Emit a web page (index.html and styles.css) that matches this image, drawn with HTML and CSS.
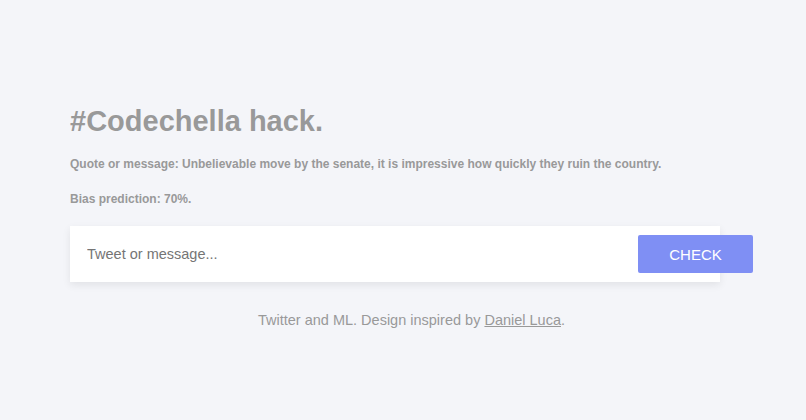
FILE: index.html
```html
<!DOCTYPE html>
<html>
<head>
<meta charset="utf-8">
<link rel="stylesheet" href="styles.css">
</head>
<body>
<main class="wrap">
  <h1 class="title">#Codechella hack.</h1>
  <p class="info">Quote or message: Unbelievable move by the senate, it is impressive how quickly they ruin the country.</p>
  <p class="info">Bias prediction: 70%.</p>
  <form class="form">
    <input class="field" type="text" placeholder="Tweet or message...">
    <button class="btn" type="button">CHECK</button>
  </form>
  <p class="footer">Twitter and ML. Design inspired by <a class="link" href="#">Daniel Luca</a>.</p>
</main>
</body>
</html>
```
FILE: styles.css
```css
html, body {
  margin: 0;
  padding: 0;
  background: #f4f5f9;
  font-family: "Liberation Sans", Arial, sans-serif;
  color: #999;
}
.wrap {
  width: 683px;
  margin-left: 70px;
  padding-top: 104px;
}
.title {
  margin: 0;
  font-size: 29px;
  font-weight: bold;
  color: #999;
  line-height: 34px;
}
.info {
  margin: 18px 0 0;
  font-size: 12px;
  font-weight: bold;
  line-height: 16px;
}
.info + .info {
  margin-top: 19px;
}
.form {
  display: flex;
  align-items: center;
  margin-top: 19px;
}
.field {
  width: 650px;
  height: 56px;
  box-sizing: border-box;
  border: none;
  outline: none;
  background: #fff;
  padding: 0 17px;
  font-family: "Liberation Sans", Arial, sans-serif;
  font-size: 14.5px;
  color: #666;
  box-shadow: 0 3px 8px rgba(0,0,0,0.08);
}
.field::placeholder {
  color: #757575;
}
.btn {
  width: 115px;
  height: 38px;
  margin-left: -82px;
  border: none;
  border-radius: 2px;
  background: #7f8ff4;
  color: #fff;
  font-family: "Liberation Sans", Arial, sans-serif;
  font-size: 15px;
  position: relative;
}
.footer {
  text-align: center;
  margin: 29px 0 0;
  font-size: 14.5px;
  line-height: 18px;
}
.link {
  color: #999;
}
```
